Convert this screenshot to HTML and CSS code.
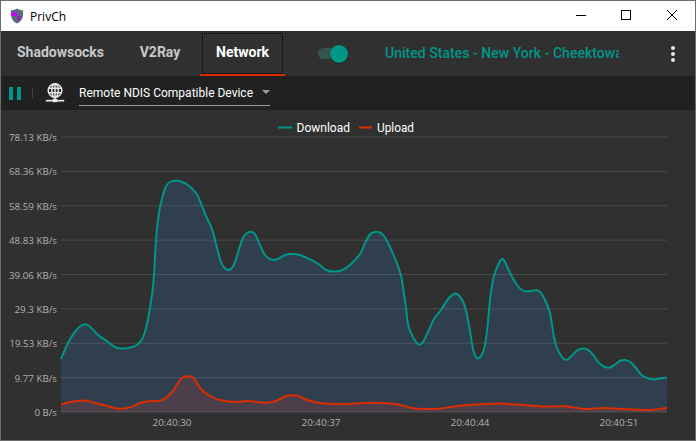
FILE: index.html
```html
<!DOCTYPE html>
<html lang="en">
<head>
<meta charset="utf-8">
<title>PrivCh</title>
<link rel="stylesheet" href="styles.css">
</head>
<body>
<div class="window">
  <header class="titlebar">
    <svg class="app-icon" width="14" height="16" viewBox="0 0 14 16">
      <path fill="#546e7a" d="M7 .5C8.500 1.700 11 2.300 13 2.300C13.700 8 12.500 13 7 15.500C1.500 13 .3 8 1 2.300C3 2.300 5.500 1.700 7 .5z"/>
      <path fill="#d500f9" d="M7 3V8H1.200L1.500 4.500C4 4.500 5.800 4 7 3z"/>
      <path fill="#9c27b0" d="M7 8h5c-.6 2.600-2 4.500-5 5.500z"/>
    </svg>
    <span class="app-title">PrivCh</span>
    <svg class="controls" width="104" height="30" viewBox="0 0 104 30" fill="none" stroke="#000" shape-rendering="crispEdges">
      <path d="M1 14.500h10M46.500 9.500h9v9h-9z"/>
      <path shape-rendering="auto" d="M92 9l10 10M102 9l-10 10"/>
    </svg>
  </header>
  <nav class="tabs">
    <div class="tab tab-shadow">Shadowsocks</div>
    <div class="tab tab-v2ray">V2Ray</div>
    <div class="tab tab-active"><span class="focus">Network</span></div>
    <div class="switch"><span class="knob"></span></div>
    <div class="server">United States - New York - Cheektowaga</div>
    <div class="more"><i></i><i></i><i></i></div>
  </nav>
  <div class="toolbar">
    <div class="pause"><i></i><i></i></div>
    <div class="divider"></div>
    <svg class="globe" width="20" height="20" viewBox="0 0 20 20" fill="none" stroke="#e6e6e6" stroke-width="1.500">
      <circle cx="10" cy="7.500" r="6.800"/>
      <ellipse cx="10" cy="7.500" rx="3.200" ry="6.800"/>
      <path d="M10 .7v16M3.500 5.200h13M3.500 9.800h13"/>
      <path stroke-width="1.700" d="M.8 17.700h18.400"/>
      <path stroke-width="3.400" d="M7.800 17.500h4.400"/>
    </svg>
    <div class="select"><span>Remote NDIS Compatible Device</span><i class="caret"></i></div>
  </div>
  <main class="chart">
    <svg id="plot" width="694" height="330" viewBox="1 110 694 330">
      <g id="areas"></g>
      <g id="grid"></g>
      <g id="lines"></g>
      <g class="legend">
        <path class="download-line" d="M278 127.500h14"/>
        <text x="296.500" y="132" textLength="53.500" lengthAdjust="spacingAndGlyphs">Download</text>
        <path class="upload-line" d="M359 127.500h13"/>
        <text x="377" y="132" textLength="37" lengthAdjust="spacingAndGlyphs">Upload</text>
      </g>
      <g id="labels" class="labels"></g>
    </svg>
  </main>
</div>
<script src="chart.js"></script>
</body>
</html>
```
FILE: styles.css
```css
* { box-sizing: border-box; }
body { margin: 0; font-family: Roboto, "Liberation Sans", sans-serif; overflow: hidden; }
.window { width: 696px; height: 441px; border: 1px solid #6d6d6d; background: #303030; }
.titlebar { height: 30px; background: #fff; display: flex; align-items: center; padding-left: 9px; }
.app-icon { margin-top: -1px; }
.app-title { margin-left: 6px; font: 12px "Open Sans", sans-serif; color: #000; }
.controls { margin-left: auto; margin-right: 16px; }
.tabs { height: 45px; display: flex; align-items: stretch; font-size: 14px; font-weight: 700; color: #c8c8c8; }
.tab { display: flex; align-items: center; justify-content: center; padding-bottom: 3px; white-space: nowrap; }
.tab-shadow { width: 119px; }
.tab-v2ray { width: 80px; }
.tab-active { width: 85px; color: #fff; border-bottom: 2px solid #dd2c00; padding: 2px 2px 0; }
.focus { width: 81px; height: 41px; border: 1px dotted #000; display: flex; align-items: center; justify-content: center; padding-bottom: 3px; }
.switch { width: 27px; height: 11px; border-radius: 6px; background: #37544f; margin: 17px 0 0 33px; display: flex; justify-content: flex-end; align-items: center; }
.knob { flex: none; width: 18px; height: 18px; border-radius: 50%; background: #009688; margin-right: -3px; box-shadow: 0 1px 1px #222; }
.server { margin-left: 40px; width: 234px; overflow: hidden; white-space: nowrap; color: #009688; font-weight: 500; line-height: 44px; letter-spacing: .03px; }
.more { margin-left: 52px; display: flex; flex-direction: column; gap: 2px; padding-top: 15px; }
.more i { width: 4px; height: 4px; border-radius: 50%; background: #e6e6e6; }
.toolbar { height: 34px; background: #212121; display: flex; align-items: center; }
.pause { display: flex; gap: 4px; margin-left: 8px; }
.pause i { width: 4px; height: 13px; background: #009688; }
.divider { width: 1px; height: 10px; background: #424242; margin-left: 11px; }
.globe { margin-left: 12px; }
.select { width: 191px; height: 26px; margin: 0 0 0 14px; border-bottom: 1px solid #9e9e9e; display: flex; align-items: center; justify-content: space-between; font-size: 12px; color: #fff; white-space: nowrap; }
.caret { border: 4px solid transparent; border-top-color: #9e9e9e; border-bottom: 0; margin-top: -2px; }
.chart { height: 330px; }
.chart svg { display: block; }
.legend text { font: 12px Roboto, sans-serif; fill: #fff; }
.labels { font: 9.500px "Open Sans", sans-serif; fill: #b0b0b0; }
.grid-line { stroke: #fff; stroke-opacity: .13; }
.download-line { stroke: #009688; stroke-width: 2; fill: none; }
.upload-line { stroke: #dd2c00; stroke-width: 2; fill: none; }
.download-area { fill: #2f3f4d; }
.upload-area { fill: #4c3f49; }
```
FILE: chart.js
```js
const LEFT = 61, RIGHT = 667, TOP = 137, BASE = 412;

const download = [[61,359],[65,349.5],[70,339.5],[76,330.5],[81,325.8],[85,324.3],[89,325.8],[98,335],[106,340.5],[115,347],[121,348.5],[128,348],[135,346.2],[140,342],[144,335],[148,319],[152,295],[154,275],[155,256],[156,240],[157.5,224],[160,207],[163,195],[166,186.5],[170,182],[176,180.8],[182,182],[188,185],[196,193],[200,201],[206,216],[212,229],[216,244],[221,262],[225,268.5],[229,270],[233,266.5],[237,256],[242,240],[246,234],[251,231.8],[255,234],[259,243],[264,253.5],[269,258.5],[274,260],[280,258],[285,255],[292,254],[300,255],[308,258.500],[317,263],[326,270],[334,271.5],[342,270.3],[350,265],[360,254],[365,243],[370,234.5],[374,232.2],[379,232.3],[384,236],[390,247],[400,272],[403,287],[406,308],[408,324],[411,333],[416,342],[419.5,344.7],[423,342],[428,332],[434,319],[441,310],[449,298],[455,293.5],[459,295.5],[464,304],[467,315],[470,331],[473,349],[476,357.3],[478,358.4],[482,354.5],[485,345],[487.5,327],[490,300],[493,280],[496,270],[500,261],[502.3,258.8],[505,262],[511,275],[517,285],[522,290],[527,291.5],[533,290.7],[537,290.2],[541,293],[546,302],[550,313],[552,325],[554,337],[557,348],[562,357],[566,360],[570,357.5],[577,350.5],[583,348.5],[589,350.5],[594,356],[599,363],[605,367],[610,367.5],[615,364.5],[620,360.8],[625,360],[631,362.5],[636,368],[641,374.5],[647,378],[653,379.5],[659,378.5],[667,377.5]];
const upload = [[61,404.7],[70,402],[80,400.7],[88,400.8],[95,403],[106,405.5],[114,408],[122,408.7],[130,407.3],[140,403],[148,401.2],[158,401],[165,398.5],[173,391],[180,380],[184,377],[188,376.3],[193,377.8],[202,390],[210,396],[220,400],[234,402],[248,401],[265,402.7],[276,401],[285,396.5],[292,395.3],[299,396.3],[308,400.3],[320,403],[340,404],[372,402.8],[395,404],[412,408],[425,409],[440,408.5],[460,405.7],[480,404.3],[497,403.5],[515,404.3],[545,406.5],[565,406.3],[580,408.5],[590,409],[603,408],[620,408.8],[645,410],[655,409.5],[667,407.8]];
const yLabels = [["78.13 KB/s",48],["68.36 KB/s",48],["58.59 KB/s",48],["48.83 KB/s",48],["39.06 KB/s",48],["29.3 KB/s",42.500],["19.53 KB/s",47.5],["9.77 KB/s",42.500],["0 B/s",22.5]];
const xLabels = [["20:40:30",172],["20:40:37",321],["20:40:44",470],["20:40:51",619]];

function add(parent, name, attrs, text) {
  const node = document.createElementNS("http://www.w3.org/2000/svg", name);
  for (const key in attrs) node.setAttribute(key, attrs[key]);
  if (text) node.textContent = text;
  document.getElementById(parent).appendChild(node);
}

function curve(p) {
  let d = "M" + p[0];
  for (let i = 0; i < p.length - 1; i++) {
    const a = p[i - 1] || p[i], b = p[i], c = p[i + 1], e = p[i + 2] || c;
    d += "C" + [b[0] + (c[0] - a[0]) / 6, b[1] + (c[1] - a[1]) / 6,
                c[0] - (e[0] - b[0]) / 6, c[1] - (e[1] - b[1]) / 6, c[0], c[1]];
  }
  return d;
}

for (const [name, points] of [["download", download], ["upload", upload]]) {
  const d = curve(points);
  add("areas", "path", { class: name + "-area", d: d + `L${RIGHT},${BASE}L${LEFT},${BASE}Z` });
  add("lines", "path", { class: name + "-line", d });
}

yLabels.forEach(([text, width], i) => {
  const y = TOP + i * (BASE - TOP) / 8;
  add("grid", "path", { class: "grid-line", d: `M${LEFT} ${y}H${RIGHT}` });
  add("labels", "text", { x: 57 - width, y: y + 4, textLength: width, lengthAdjust: "spacingAndGlyphs" }, text);
});
xLabels.forEach(([text, x]) =>
  add("labels", "text", { x: x - 19.5, y: 426, textLength: 39, lengthAdjust: "spacingAndGlyphs" }, text));
```
